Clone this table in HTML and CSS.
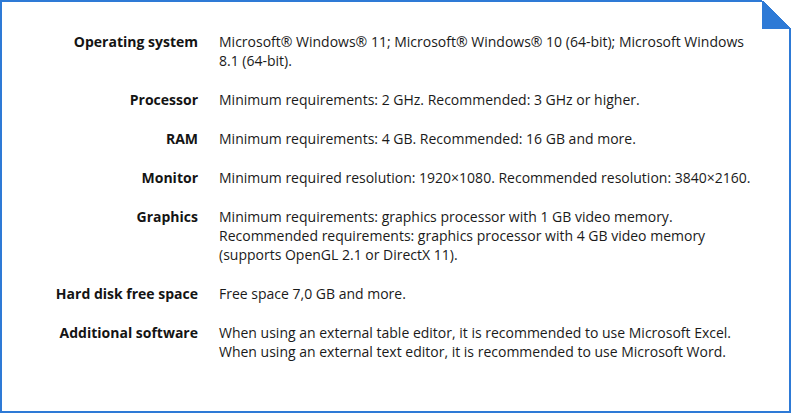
FILE: index.html
```html
<!DOCTYPE html>
<html lang="en">
<head>
<meta charset="utf-8">
<link rel="stylesheet" href="styles.css">
</head>
<body>
<div class="card">
  <dl class="specs">
    <dt>Operating system</dt>
    <dd>Microsoft® Windows® 11; Microsoft® Windows® 10 (64-bit); Microsoft Windows<br>8.1 (64-bit).</dd>
    <dt>Processor</dt>
    <dd>Minimum requirements: 2 GHz. Recommended: 3 GHz or higher.</dd>
    <dt>RAM</dt>
    <dd>Minimum requirements: 4 GB. Recommended: 16 GB and more.</dd>
    <dt>Monitor</dt>
    <dd>Minimum required resolution: 1920×1080. Recommended resolution: 3840×2160.</dd>
    <dt>Graphics</dt>
    <dd>Minimum requirements: graphics processor with 1 GB video memory.<br>Recommended requirements: graphics processor with 4 GB video memory<br>(supports OpenGL 2.1 or DirectX 11).</dd>
    <dt>Hard disk free space</dt>
    <dd>Free space 7,0 GB and more.</dd>
    <dt>Additional software</dt>
    <dd>When using an external table editor, it is recommended to use Microsoft Excel.<br>When using an external text editor, it is recommended to use Microsoft Word.</dd>
  </dl>
</div>
</body>
</html>
```
FILE: styles.css
```css
html, body {
  margin: 0;
  padding: 0;
  background: #ffffff;
}

body {
  font-family: "Open Sans", "Liberation Sans", sans-serif;
  font-size: 14px;
  line-height: 19.4px;
  color: #1a1a1a;
}

.card {
  position: relative;
  box-sizing: border-box;
  width: 791px;
  height: 413px;
  border: 2px solid #2e7ad6;
  padding: 30px 20px 0 0;
}

.card::before {
  content: "";
  position: absolute;
  top: -2px;
  right: -2px;
  width: 29px;
  height: 29px;
  background: linear-gradient(to bottom left, #ffffff 50%, #2e7ad6 50%);
}

.specs {
  margin: 0;
  display: grid;
  grid-template-columns: 196px 1fr;
  column-gap: 21px;
  row-gap: 19.4px;
}

.specs dt {
  margin: 0;
  font-weight: 700;
  text-align: right;
  color: #141414;
}

.specs dd {
  margin: 0;
}
```
